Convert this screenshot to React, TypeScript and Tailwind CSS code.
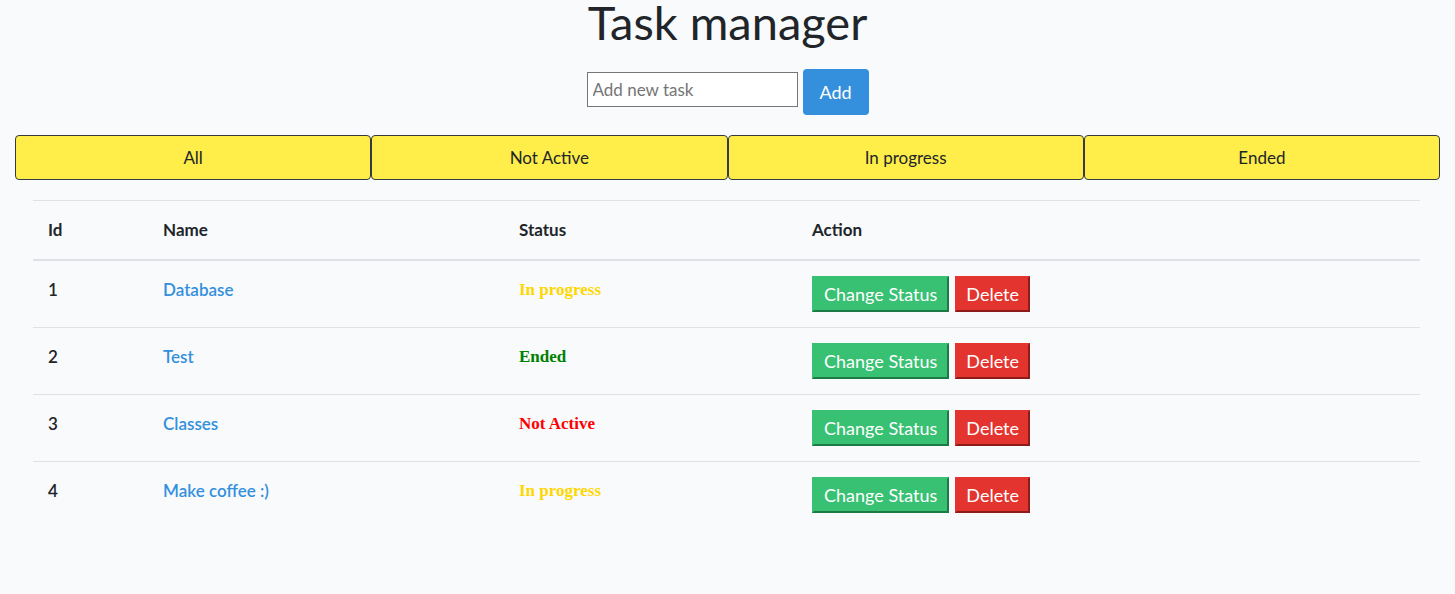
import React from "react"

type Task = { id: number; name: string; status: "In progress" | "Ended" | "Not Active" }

const tasks: Task[] = [
  { id: 1, name: "Database", status: "In progress" },
  { id: 2, name: "Test", status: "Ended" },
  { id: 3, name: "Classes", status: "Not Active" },
  { id: 4, name: "Make coffee :)", status: "In progress" },
]

function StatusLabel({ status }: { status: Task["status"] }) {
  if (status === "Ended") return <b className="text-[#008000]">{status}</b>
  if (status === "Not Active") return <b className="text-[#ff0000]">{status}</b>
  return <b className="text-[#ffd700]">{status}</b>
}

export default function App() {
  const filters = ["All", "Not Active", "In progress", "Ended"]

  return (
    <div
      className="flow-root min-h-[594px] bg-[#f8fafc] text-[#212529] text-[16px]"
      style={{ fontFamily: "Lato, 'Noto Sans', sans-serif" }}
    >
      {/* Header */}
      <h1 className="text-center text-[47px] leading-[42px] font-normal pt-[1px]">Task manager</h1>

      {/* New task form */}
      <div className="flex justify-center items-center gap-[5px] mt-[26px]">
        <input
          className="w-[211px] h-[35px] mb-[6px] border border-[#767676] bg-white px-[5px] text-[17px] placeholder:text-[#757575] outline-none"
          placeholder="Add new task"
        />
        <button className="w-[66px] h-[46px] rounded-[4px] bg-[#3490dc] text-white text-[18px]">Add</button>
      </div>

      {/* Filters */}
      <div className="grid grid-cols-4 px-[15px] mt-[20px]">
        {filters.map((f) => (
          <button
            key={f}
            className="h-[45px] bg-[#ffed4a] border border-[#343a40] rounded-[4px] text-[17px] text-[#212529]"
          >
            {f}
          </button>
        ))}
      </div>

      {/* Table */}
      <div className="ml-[33px] mr-[35px] mt-[20px]">
        <div className="grid grid-cols-[115px_356px_293px_1fr] border-t border-[#dee2e6] border-b-2 h-[61px] items-center font-bold text-[17px]">
          <div className="pl-[15px]">Id</div>
          <div className="pl-[15px]">Name</div>
          <div className="pl-[15px]">Status</div>
          <div className="pl-[15px]">Action</div>
        </div>
        {tasks.map((t, i) => (
          <div
            key={t.id}
            className={`grid grid-cols-[115px_356px_293px_1fr] h-[67px] items-start pt-[16px] ${i < tasks.length - 1 ? "border-b border-[#dee2e6]" : ""}`}
          >
            <div className="pl-[15px] text-[17px] leading-[26px] font-semibold">{t.id}</div>
            <div className="pl-[15px] text-[17px] leading-[26px] font-semibold text-[#3490dc]">{t.name}</div>
            <div
              className="pl-[15px] text-[17px] leading-[26px]"
              style={{ fontFamily: "'Liberation Serif', serif" }}
            >
              <StatusLabel status={t.status} />
            </div>
            <div className="pl-[15px] flex gap-[6px] -mt-[1px]">
              <button className="h-[36px] px-[10px] bg-[#38c172] text-white text-[18px] border-2 border-[#38c172] border-r-[#1e7a45] border-b-[#1e7a45]">
                Change Status
              </button>
              <button className="h-[36px] px-[9px] bg-[#e3342f] text-white text-[18px] border-2 border-[#e3342f] border-r-[#8b1c19] border-b-[#8b1c19]">
                Delete
              </button>
            </div>
          </div>
        ))}
      </div>
    </div>
  )
}
